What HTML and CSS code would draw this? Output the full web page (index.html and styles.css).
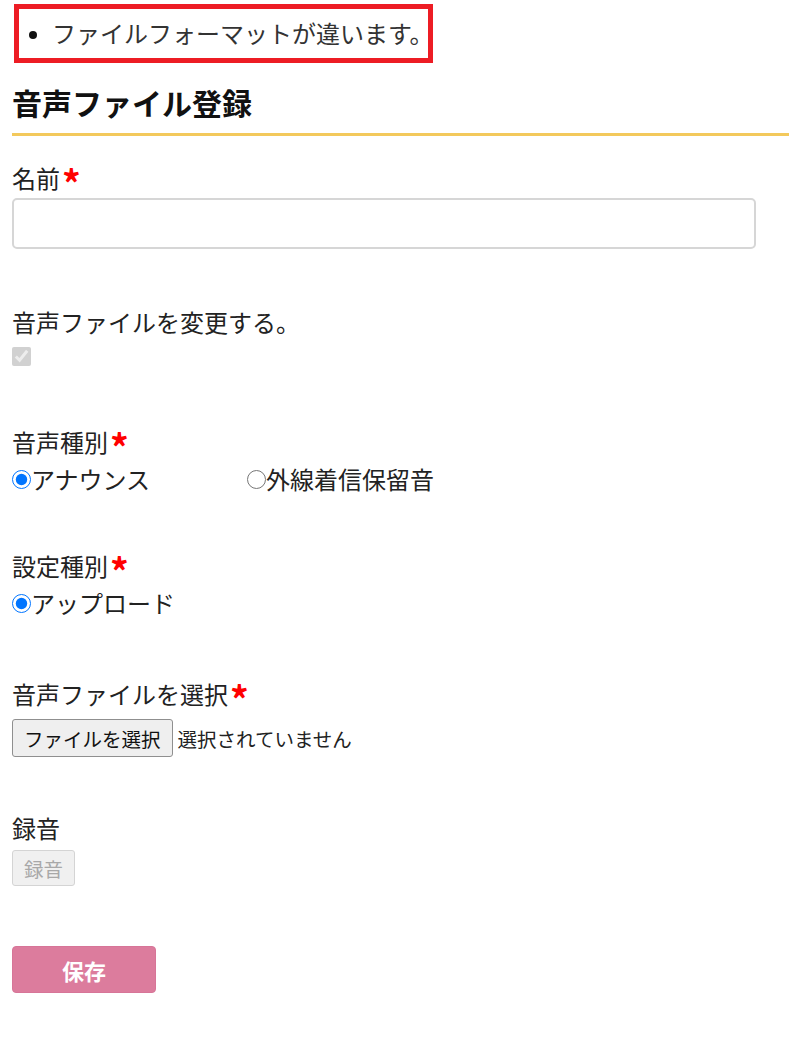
FILE: index.html
```html
<!DOCTYPE html>
<html lang="ja">
<head>
    <meta charset="utf-8">
    <title>音声ファイル登録</title>
    <link rel="stylesheet" href="styles.css">
</head>
<body>
    <div class="error-box">
        <ul>
            <li>ファイルフォーマットが違います。</li>
        </ul>
    </div>

    <h2 class="page-title">音声ファイル登録</h2>

    <form class="voice-form" onsubmit="return false;">
        <div class="field field-name">
            <label class="field-label" for="voice-name">名前<span class="required">*</span></label>
            <input type="text" id="voice-name" class="text-input">
        </div>

        <div class="field">
            <div class="field-label">音声ファイルを変更する。</div>
            <div class="control-row row-check">
                <input type="checkbox" checked disabled>
            </div>
        </div>

        <div class="field">
            <div class="field-label">音声種別<span class="required">*</span></div>
            <div class="control-row">
                <label class="radio-option radio-wide"><input type="radio" name="voice-type" checked>アナウンス</label>
                <label class="radio-option"><input type="radio" name="voice-type">外線着信保留音</label>
            </div>
        </div>

        <div class="field">
            <div class="field-label">設定種別<span class="required">*</span></div>
            <div class="control-row">
                <label class="radio-option"><input type="radio" name="setting-type" checked>アップロード</label>
            </div>
        </div>

        <div class="field field-file">
            <div class="field-label">音声ファイルを選択<span class="required">*</span></div>
            <div class="file-row">
                <button type="button" class="file-button">ファイルを選択</button>
                <span class="file-status">選択されていません</span>
            </div>
        </div>

        <div class="field field-record">
            <div class="field-label">録音</div>
            <button type="button" class="record-button" disabled>録音</button>
        </div>

        <button type="submit" class="save-button">保存</button>
    </form>
</body>
</html>
```

FILE: styles.css
```css
body {
    margin: 0;
    padding: 4px 0 40px 12px;
    font-family: "Noto Sans CJK JP", "Noto Sans", sans-serif;
    font-size: 24px;
    color: #222;
    background: #fff;
}

.error-box {
    width: 419px;
    height: 59px;
    box-sizing: border-box;
    margin-left: 2px;
    border: 5px solid #ed1c24;
}

.error-box ul {
    margin: 0;
    padding-left: 33px;
    line-height: 47px;
    white-space: nowrap;
    color: #333;
}

.error-box li::marker {
    font-family: "Liberation Sans", sans-serif;
    font-size: 28px;
    color: #111;
}

.page-title {
    margin: 19px 0 0 0;
    padding-bottom: 11px;
    font-size: 30px;
    line-height: 40px;
    font-weight: bold;
    color: #111;
    border-bottom: 3px solid #f3c95c;
}

.field {
    margin-top: 58px;
}

.field-name {
    margin-top: 27px;
}

.field-file {
    margin-top: 62px;
}

.field-record {
    margin-top: 56px;
}

.field-label {
    display: block;
    line-height: 30px;
    margin-bottom: 6px;
}

.required {
    color: #f00;
    font-weight: bold;
    font-size: 37px;
    line-height: 0;
    vertical-align: -10px;
    margin-left: 2px;
}

.text-input {
    display: block;
    width: 744px;
    height: 51px;
    box-sizing: border-box;
    margin-top: -1px;
    border: 2px solid #d6d6d6;
    border-radius: 5px;
    font-size: 20px;
    padding: 0 10px;
}

.control-row {
    display: flex;
    align-items: center;
    height: 30px;
}

.row-check {
    height: 26px;
}

.control-row input[type="checkbox"] {
    width: 19px;
    height: 19px;
    margin: 0;
}

.radio-option {
    display: flex;
    align-items: center;
}

.radio-option input {
    width: 19px;
    height: 19px;
    margin: 2px 0 0 0;
}

.radio-wide {
    width: 235px;
}

.file-row {
    display: flex;
    align-items: center;
    margin-top: 10px;
}

.file-button {
    height: 38px;
    padding: 0 11px;
    font-family: inherit;
    font-size: 19.5px;
    color: #111;
    background: #efefef;
    border: 1px solid #8f8f8f;
    border-radius: 3px;
}

.file-status {
    margin-left: 5px;
    font-size: 19.5px;
}

.record-button {
    display: block;
    height: 36px;
    margin-top: 7px;
    padding: 0 11px;
    font-family: inherit;
    font-size: 19.5px;
    color: #a8a8a8;
    background: #f0f0f0;
    border: 1px solid #d4d4d4;
    border-radius: 3px;
}

.save-button {
    display: block;
    width: 144px;
    height: 47px;
    margin-top: 60px;
    font-family: inherit;
    font-size: 22px;
    font-weight: bold;
    color: #fff;
    background: #dc7c9d;
    border: 1px solid #d77598;
    border-radius: 4px;
}
```
